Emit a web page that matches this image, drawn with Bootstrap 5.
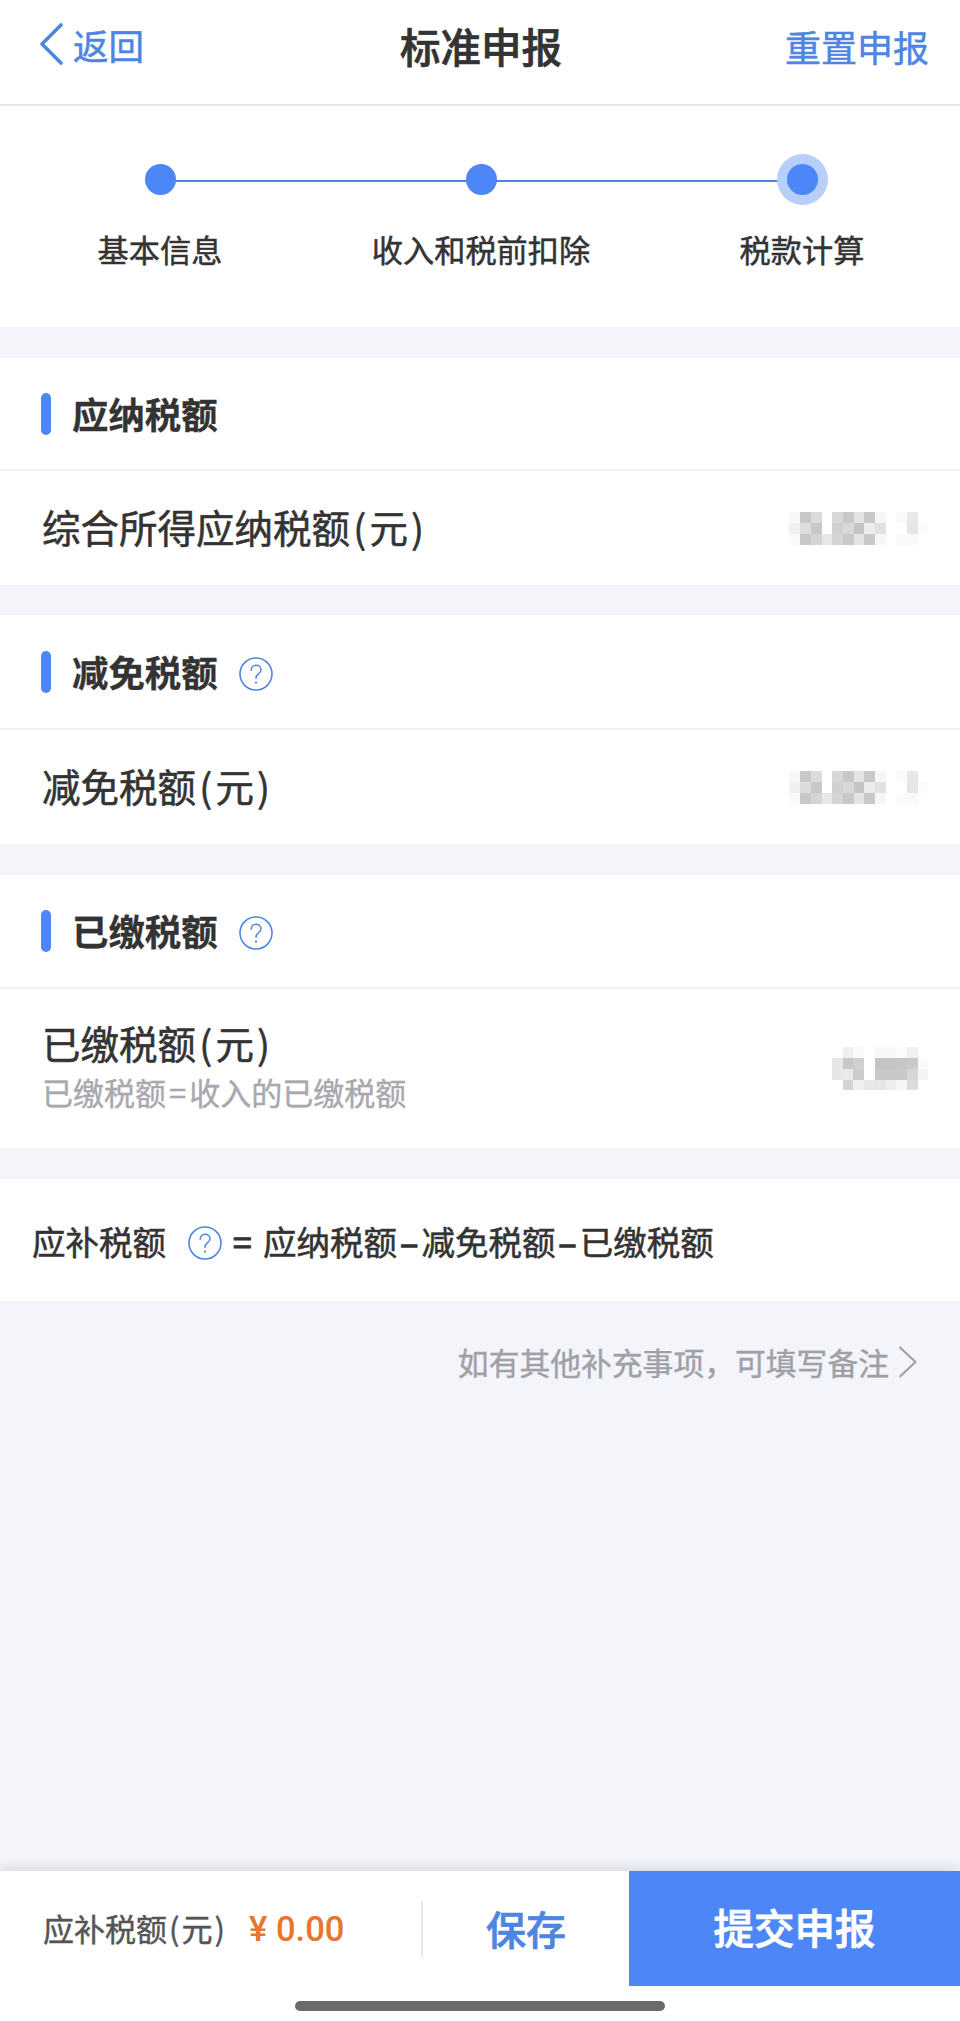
<!DOCTYPE html>
<html lang="zh-CN">
<head>
<meta charset="utf-8">
<title>标准申报</title>
<link href="https://cdn.jsdelivr.net/npm/bootstrap@5.3.0/dist/css/bootstrap.min.css" rel="stylesheet">
<style>
body{font-family:"Noto Sans CJK SC","Liberation Sans",sans-serif;background:#f4f5fa;color:#333;width:960px;min-height:2021px}
.page-shell{min-height:2021px}
.top-bar{height:106px;padding:0 31px 12px;border-bottom:2px solid #e6e6e6}
.top-side{flex:1 1 0}
.top-back{padding-left:8px;gap:10px;color:#4d86e0;font-size:35.5px;line-height:1;-webkit-text-stroke:.5px #4d86e0}
.top-back span{padding-top:2px}
.top-title{font-size:40.5px;line-height:1;font-weight:500;-webkit-text-stroke:.7px #333;margin-left:2px}
.top-reset{color:#4d86e0;font-size:36px;line-height:1;-webkit-text-stroke:.5px #4d86e0;text-align:right}
.step-wrap{height:221px;padding:48px 38px 0 40px}
.step-line{left:160px;top:74px;width:642px;height:2px;background:#4f84dc}
.step-item{width:240px;z-index:1}
.step-halo{width:51px;height:51px;border-radius:50%}
.step-halo.is-on{background:#b7d0f9}
.step-dot{width:31px;height:31px;background:#4d86f7}
.step-label{font-size:31.2px;line-height:40px;margin-top:24px;-webkit-text-stroke:.5px #333}
.tax-block{margin-top:30px}
.tax-block.gap-lg{margin-top:31px}
.tax-head{border-bottom:2px solid #f1f1f4;padding-left:41px}
.head-a{height:113px}.head-b{height:115px}.head-c{height:114px}
.tax-bar{width:10px;height:42px;background:#4d86f7;border-radius:5px;margin-right:21px}
.tax-title{font-size:36.4px;line-height:44px;font-weight:700;color:#333;-webkit-text-stroke:.3px #333;padding-bottom:2px}
.tip-icon{width:34px;height:34px;margin:4px 0 0 21px;flex:none}
.tax-row{height:114px;padding:0 32px 0 42px}
.tax-row.row-tall{height:159px}
.row-name{font-size:38.5px;line-height:50px;-webkit-text-stroke:.55px #333;padding-bottom:4px}
.row-tall .row-name{padding-bottom:0;margin-top:-4px}
.paren{padding:0 3.2px}
.row-sub{font-size:31px;line-height:50px;color:#a8a8ae;-webkit-text-stroke:.4px #a8a8ae}
.sign{padding:0 3px}
.mosaic{display:block;flex:none;filter:blur(.5px)}
.formula{height:122px;padding:2px 0 0 32px;font-size:33.5px;line-height:44px;-webkit-text-stroke:.55px #333;white-space:nowrap}
.formula .tip-icon{margin:4px 11px 0 22px}
.formula-eq{margin-right:11.5px;-webkit-text-stroke:1.2px #333}
.formula-op{display:inline-block;width:24.3px;text-align:center;-webkit-text-stroke:1.6px #333}
.note-row{height:122px;padding-right:43px;color:#a0a0a6;font-size:30.8px;line-height:44px;-webkit-text-stroke:.4px #a0a0a6;gap:9px}
.foot-bar{height:150px;box-shadow:0 -3px 12px rgba(0,0,0,.12)}
.foot-row{height:115px}
.foot-sum{width:421px;padding-left:43px}
.sum-name{font-size:31px;color:#555;-webkit-text-stroke:.45px #555;line-height:44px;padding-bottom:2px}
.sum-name .paren{padding:0 2px}
.sum-val{font-size:34.6px;line-height:44px;color:#e8762c;font-weight:500;font-family:Roboto,"Liberation Sans",sans-serif;margin-left:22px;white-space:pre}
.foot-rule{width:2px;height:56px;background:#e8e8e8}
.btn-save{width:206px;font-size:40px;line-height:1;color:#4d86e0;font-weight:500;-webkit-text-stroke:.7px #4d86e0;padding:0 0 2px;border:0}
.btn-send{width:331px;height:115px;background:#4d86f7;color:#fff;font-size:40.5px;line-height:1;font-weight:500;-webkit-text-stroke:.8px #fff;padding:0 0 2px;border:0;border-radius:0}
.home-pill{width:370px;height:10px;background:#6b6b6b;margin-top:15px}
</style>
</head>
<body>
<svg width="0" height="0" class="position-absolute">
  <symbol id="ic-tip" viewBox="0 0 34 34">
    <circle cx="17" cy="17" r="16" fill="none" stroke="#4d86e0" stroke-width="1.6"/>
    <path d="M12.2 13.2c0-3 2.2-5 4.9-5 2.8 0 4.9 1.9 4.9 4.5 0 2-1.2 3.2-2.8 4.4-1.5 1.1-2.2 2.1-2.2 4.1" fill="none" stroke="#4d86e0" stroke-width="1.5" stroke-linecap="round"/>
    <circle cx="17" cy="25.6" r="1.1" fill="#4d86e0"/>
  </symbol>
  <symbol id="mosaic-a" viewBox="0 0 139 33">
    <g shape-rendering="crispEdges">
      <rect x="0" y="0" width="11" height="11" fill="#f8f8f8"/><rect x="11" y="0" width="11" height="11" fill="#c8c8c8"/><rect x="22" y="0" width="11" height="11" fill="#dcdcdc"/><rect x="43" y="0" width="11" height="11" fill="#d8d8d8"/><rect x="54" y="0" width="11" height="11" fill="#c8c8c8"/><rect x="65" y="0" width="11" height="11" fill="#e4e4e4"/><rect x="75" y="0" width="11" height="11" fill="#c8c8c8"/><rect x="86" y="0" width="11" height="11" fill="#f6f6f6"/><rect x="107" y="0" width="11" height="11" fill="#fafafa"/><rect x="118" y="0" width="11" height="11" fill="#e8e8e8"/>
      <rect x="0" y="11" width="11" height="11" fill="#f0f0f0"/><rect x="11" y="11" width="11" height="11" fill="#dcdcdc"/><rect x="22" y="11" width="11" height="11" fill="#c8c8c8"/><rect x="43" y="11" width="11" height="11" fill="#d0d0d0"/><rect x="54" y="11" width="11" height="11" fill="#d8d8d8"/><rect x="65" y="11" width="11" height="11" fill="#c4c4c4"/><rect x="75" y="11" width="11" height="11" fill="#ececec"/><rect x="86" y="11" width="11" height="11" fill="#e2e2e2"/><rect x="118" y="11" width="11" height="11" fill="#e6e6e6"/><rect x="129" y="11" width="10" height="11" fill="#fbfbfb"/>
      <rect x="0" y="22" width="11" height="11" fill="#fafafa"/><rect x="11" y="22" width="11" height="11" fill="#c8c8c8"/><rect x="22" y="22" width="11" height="11" fill="#d4d4d4"/><rect x="33" y="22" width="10" height="11" fill="#e8e8e8"/><rect x="43" y="22" width="11" height="11" fill="#d4d4d4"/><rect x="54" y="22" width="11" height="11" fill="#c8c8c8"/><rect x="65" y="22" width="11" height="11" fill="#e4e4e4"/><rect x="75" y="22" width="11" height="11" fill="#c8c8c8"/><rect x="86" y="22" width="11" height="11" fill="#f6f6f6"/><rect x="107" y="22" width="11" height="11" fill="#fafafa"/><rect x="118" y="22" width="11" height="11" fill="#fafafa"/>
    </g>
  </symbol>
  <symbol id="mosaic-b" viewBox="0 0 96 43">
    <g shape-rendering="crispEdges">
      <rect x="11" y="0" width="10" height="11" fill="#efefef"/><rect x="21" y="0" width="11" height="11" fill="#fafafa"/><rect x="43" y="0" width="21" height="11" fill="#f8f8f8"/><rect x="64" y="0" width="11" height="11" fill="#fbfbfb"/><rect x="75" y="0" width="11" height="11" fill="#f0f0f0"/>
      <rect x="0" y="11" width="11" height="11" fill="#e6e6e6"/><rect x="11" y="11" width="10" height="11" fill="#c8c8c8"/><rect x="21" y="11" width="11" height="11" fill="#d0d0d0"/><rect x="43" y="11" width="21" height="11" fill="#c4c4c4"/><rect x="64" y="11" width="11" height="11" fill="#c6c6c6"/><rect x="75" y="11" width="11" height="11" fill="#cacaca"/><rect x="86" y="11" width="10" height="11" fill="#fafafa"/>
      <rect x="0" y="22" width="11" height="11" fill="#e6e6e6"/><rect x="11" y="22" width="10" height="11" fill="#eaeaea"/><rect x="21" y="22" width="11" height="11" fill="#cccccc"/><rect x="43" y="22" width="32" height="11" fill="#c8c8c8"/><rect x="75" y="22" width="11" height="11" fill="#d6d6d6"/><rect x="86" y="22" width="10" height="11" fill="#f4f4f4"/>
      <rect x="11" y="33" width="10" height="10" fill="#d4d4d4"/><rect x="21" y="33" width="11" height="10" fill="#f0f0f0"/><rect x="32" y="33" width="11" height="10" fill="#e8e8e8"/><rect x="43" y="33" width="11" height="10" fill="#e6e6e6"/><rect x="54" y="33" width="10" height="10" fill="#ededed"/><rect x="64" y="33" width="11" height="10" fill="#f6f6f6"/><rect x="75" y="33" width="11" height="10" fill="#dcdcdc"/>
    </g>
  </symbol>
</svg>

<div class="page-shell d-flex flex-column">
  <header class="top-bar bg-white d-flex align-items-center">
    <div class="top-side"><a class="top-back d-inline-flex align-items-center text-decoration-none" href="#">
      <svg width="24" height="42" viewBox="0 0 24 42"><path d="M22 2 3 21l19 19" fill="none" stroke="#4d86e0" stroke-width="3.6" stroke-linecap="round" stroke-linejoin="round"/></svg>
      <span>返回</span></a></div>
    <div class="top-title">标准申报</div>
    <div class="top-side top-reset">重置申报</div>
  </header>

  <main class="flex-grow-1">
    <section class="step-wrap bg-white position-relative d-flex justify-content-between align-items-start">
      <div class="step-line position-absolute"></div>
      <div class="step-item d-flex flex-column align-items-center position-relative">
        <div class="step-halo d-flex align-items-center justify-content-center"><div class="step-dot rounded-circle"></div></div>
        <div class="step-label">基本信息</div>
      </div>
      <div class="step-item d-flex flex-column align-items-center position-relative">
        <div class="step-halo d-flex align-items-center justify-content-center"><div class="step-dot rounded-circle"></div></div>
        <div class="step-label">收入和税前扣除</div>
      </div>
      <div class="step-item d-flex flex-column align-items-center position-relative">
        <div class="step-halo is-on d-flex align-items-center justify-content-center"><div class="step-dot rounded-circle"></div></div>
        <div class="step-label">税款计算</div>
      </div>
    </section>

    <section class="tax-block gap-lg bg-white">
      <div class="tax-head head-a d-flex align-items-center"><span class="tax-bar"></span><span class="tax-title">应纳税额</span></div>
      <div class="tax-row d-flex align-items-center justify-content-between">
        <div class="row-name">综合所得应纳税额<span class="paren">(</span>元<span class="paren">)</span></div>
        <svg class="mosaic" width="139" height="33"><use href="#mosaic-a"/></svg>
      </div>
    </section>

    <section class="tax-block bg-white">
      <div class="tax-head head-b d-flex align-items-center"><span class="tax-bar"></span><span class="tax-title">减免税额</span><svg class="tip-icon"><use href="#ic-tip"/></svg></div>
      <div class="tax-row d-flex align-items-center justify-content-between">
        <div class="row-name">减免税额<span class="paren">(</span>元<span class="paren">)</span></div>
        <svg class="mosaic" width="139" height="33"><use href="#mosaic-a"/></svg>
      </div>
    </section>

    <section class="tax-block gap-lg bg-white">
      <div class="tax-head head-c d-flex align-items-center"><span class="tax-bar"></span><span class="tax-title">已缴税额</span><svg class="tip-icon"><use href="#ic-tip"/></svg></div>
      <div class="tax-row row-tall d-flex align-items-center justify-content-between">
        <div>
          <div class="row-name">已缴税额<span class="paren">(</span>元<span class="paren">)</span></div>
          <div class="row-sub">已缴税额<span class="sign">=</span>收入的已缴税额</div>
        </div>
        <svg class="mosaic" width="96" height="43"><use href="#mosaic-b"/></svg>
      </div>
    </section>

    <section class="tax-block gap-lg bg-white formula d-flex align-items-center">
      <span>应补税额</span><svg class="tip-icon"><use href="#ic-tip"/></svg><span class="formula-eq">=</span><span>应纳税额<span class="formula-op">–</span>减免税额<span class="formula-op">–</span>已缴税额</span>
    </section>

    <div class="note-row d-flex align-items-center justify-content-end">
      <span>如有其他补充事项&#65292;可填写备注</span>
      <svg width="19" height="32" viewBox="0 0 19 32"><path d="M1.5 1 17.5 16 1.5 31" fill="none" stroke="#a0a0a6" stroke-width="2.2"/></svg>
    </div>
  </main>

  <footer class="foot-bar bg-white mt-auto position-relative">
    <div class="foot-row d-flex align-items-center">
      <div class="foot-sum d-flex align-items-center">
        <span class="sum-name">应补税额<span class="paren">(</span>元<span class="paren">)</span></span>
        <span class="sum-val">¥ 0.00</span>
      </div>
      <div class="foot-rule"></div>
      <button type="button" class="btn btn-save">保存</button>
      <button type="button" class="btn btn-send">提交申报</button>
    </div>
    <div class="home-pill rounded-pill mx-auto"></div>
  </footer>
</div>
<script src="https://cdn.jsdelivr.net/npm/bootstrap@5.3.0/dist/js/bootstrap.bundle.min.js"></script>
</body>
</html>
